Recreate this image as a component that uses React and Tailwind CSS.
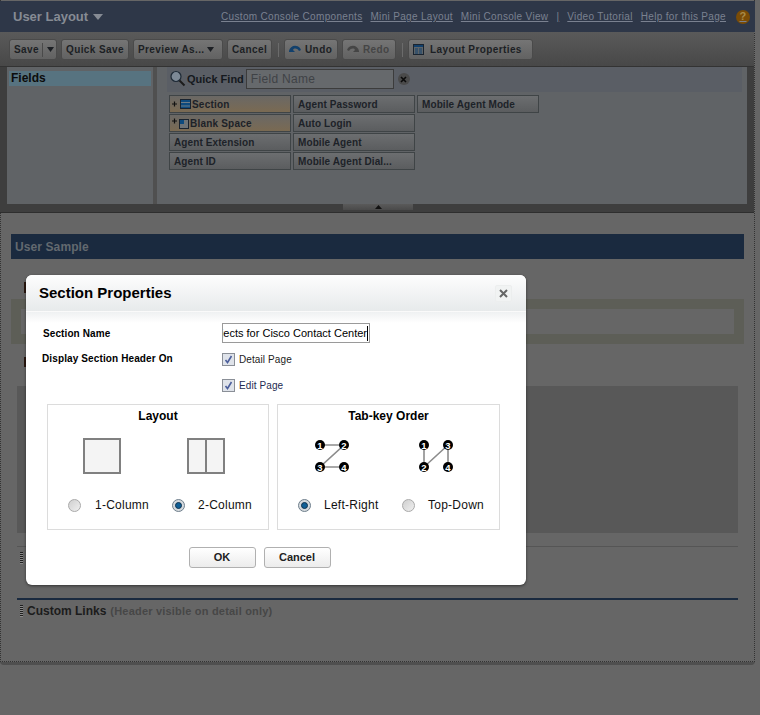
import React from 'react';

const ToolButton = ({ children, className = '' }) => (
    <div className={`h-[21px] flex items-center rounded-[3px] border border-[#4a4a4a] bg-gradient-to-b from-[#757575] to-[#626262] text-[10px] font-bold text-[#1c1f24] tracking-[0.4px] whitespace-nowrap ${className}`}>
        {children}
    </div>
);

const FieldChip = ({ label, highlight, icon }) => (
    <div className={`h-[18px] flex items-center border border-[#3f4446] text-[10px] font-bold tracking-[0.1px] text-[#1d2228] whitespace-nowrap overflow-hidden ${highlight ? 'bg-gradient-to-b from-[#6a6865] to-[#7a6a52]' : 'bg-gradient-to-b from-[#6c6e70] to-[#5b5d5f]'}`}>
        {icon}
        <span className={icon ? 'ml-[1px] tracking-[0.2px]' : 'ml-[4px]'}>{label}</span>
    </div>
);

const SectionIcon = () => (
    <svg width="19" height="11" viewBox="0 0 19 11" className="ml-[2px] shrink-0">
        <path d="M0 5h5M2.500 2.500v5" stroke="#111" strokeWidth="1.200" />
        <rect x="8.500" y="0.500" width="10" height="9" fill="#0d4a7e" stroke="#1a2430" />
        <path d="M9 3.500h9" stroke="#6d7c88" />
        <path d="M9 7h9" stroke="#6d7c88" />
    </svg>
);

const BlankIcon = () => (
    <svg width="17" height="11" viewBox="0 0 17 11" className="ml-[2px] shrink-0">
        <path d="M0 3h5M2.500 0.500v5" stroke="#111" strokeWidth="1.200" />
        <rect x="7.500" y="1.500" width="9" height="9" fill="#6d7377" stroke="#1a2430" />
        <rect x="8" y="2" width="4" height="4" fill="#0d4a7e" />
    </svg>
);

const Radio = ({ checked }) => (
    <span className={`w-[13px] h-[13px] rounded-full border shrink-0 flex items-center justify-center ${checked ? 'border-[#6f7f8c] bg-[#d5dade]' : 'border-[#a9a9a9] bg-gradient-to-br from-[#cfcfcf] to-[#f0f0f0]'}`}>
        {checked && <span className="w-[7px] h-[7px] rounded-full bg-[#0f5f96] border border-[#10334f]" />}
    </span>
);

const Check = () => (
    <span className="w-[13px] h-[13px] border border-[#8a8f97] bg-[#dfe3ea] flex items-center justify-center shrink-0">
        <svg width="9" height="9" viewBox="0 0 9 9">
            <path d="M1.500 5l2 2.500L7.500 1" fill="none" stroke="#4c5f9c" strokeWidth="1.600" />
        </svg>
    </span>
);

const Dot = ({ x, y, n }) => (
    <g>
        <circle cx={x} cy={y} r="5" fill="#000" />
        <text x={x} y={y + 3.5} textAnchor="middle" fontSize="9.500" fontWeight="700" fill="#fff" fontFamily="Liberation Sans">{n}</text>
    </g>
);

const Grip = () => (
    <span className="block w-[3px] h-[12px] shrink-0 bg-[repeating-linear-gradient(to_bottom,#1f1f1f_0,#1f1f1f_1px,#8a8a8a_1px,#8a8a8a_2px)]" />
);

const OrderIcon = ({ order }) => (
    <svg width="38" height="34" viewBox="0 0 38 34">
        {order === 'lr' ? (
            <path d="M7 7H31L7 29H31" fill="none" stroke="#8c8c8c" strokeWidth="1.600" />
        ) : (
            <path d="M7 7V29L31 7V29" fill="none" stroke="#8c8c8c" strokeWidth="1.600" />
        )}
        <Dot x={7} y={7} n="1" />
        <Dot x={31} y={7} n={order === 'lr' ? '2' : '3'} />
        <Dot x={7} y={29} n={order === 'lr' ? '3' : '2'} />
        <Dot x={31} y={29} n="4" />
    </svg>
);

const Dialog = () => (
    <div className="absolute left-[26px] top-[275px] w-[500px] h-[310px] bg-white rounded-[6px] shadow-[0_1px_3px_rgba(0,0,0,0.5)] overflow-hidden">
        <div className="h-[37px] flex items-center justify-between pl-[13px] pr-[14px] bg-gradient-to-b from-[#fdfdfd] to-[#e7eaeb] border-b border-[#fafafa]">
            <span className="text-[15px] font-bold text-black">Section Properties</span>
            <span className="w-[17px] h-[17px] flex items-center justify-center rounded-[2px] bg-[#f1f3f3] border border-[#eceeee]">
                <svg width="9" height="9" viewBox="0 0 9 9">
                    <path d="M1 1l7 7M8 1l-7 7" stroke="#666" strokeWidth="2" />
                </svg>
            </span>
        </div>
        <div className="h-[11px] bg-gradient-to-b from-[#eff1f2] to-white" />
        <div className="pl-[17px] flex h-[20px] items-center">
            <span className="w-[179px] text-[10px] font-bold tracking-[0.1px] text-black">Section Name</span>
            <div className="w-[148px] h-[20px] border border-[#9a9a9a] flex justify-end items-center overflow-hidden pr-[1px] text-[11px] text-black whitespace-nowrap">
                <span>Objects for Cisco Contact Center</span>
                <span className="w-px h-[15px] bg-black shrink-0" />
            </div>
        </div>
        <div className="pl-[16px] flex mt-[10px]">
            <span className="w-[180px] text-[10px] font-bold tracking-[0.12px] text-black leading-[13px] -mt-px">Display Section Header On</span>
            <div className="flex flex-col gap-[13px]">
                <div className="flex items-center h-[13px] gap-[4px] text-[10px] tracking-[0.1px] text-[#222]"><Check />Detail Page</div>
                <div className="flex items-center h-[13px] gap-[4px] text-[10px] tracking-[0.1px] text-[#1e2b52]"><Check />Edit Page</div>
            </div>
        </div>
        <div className="flex ml-[21px] mt-[12px] gap-[8px]">
            <div className="w-[222px] h-[126px] border border-[#dcdcdc] flex flex-col">
                <div className="text-[12px] font-bold text-center text-black mt-[3px] leading-[16px]">Layout</div>
                <div className="flex mt-[14px] pl-[35px] gap-[66px]">
                    <div className="w-[38px] h-[36px] border-[2px] border-[#808080] bg-[#f4f4f4]" />
                    <div className="w-[38px] h-[36px] border-[2px] border-[#808080] bg-[#f4f4f4] flex justify-center">
                        <div className="w-[2px] bg-[#808080]" />
                    </div>
                </div>
                <div className="flex items-center mt-[22px] pl-[20px] text-[12px] tracking-[0.25px] text-[#111]">
                    <Radio />
                    <span className="ml-[14px] w-[77px]">1-Column</span>
                    <Radio checked />
                    <span className="ml-[13px]">2-Column</span>
                </div>
            </div>
            <div className="w-[223px] h-[126px] border border-[#dcdcdc] flex flex-col">
                <div className="text-[12px] font-bold text-center text-black mt-[3px] leading-[16px]">Tab-key Order</div>
                <div className="flex mt-[14px] pl-[35px] gap-[66px]">
                    <OrderIcon order="lr" />
                    <OrderIcon order="td" />
                </div>
                <div className="flex items-center mt-[24px] pl-[20px] text-[12px] tracking-[0.25px] text-[#111]">
                    <Radio checked />
                    <span className="ml-[13px] w-[78px]">Left-Right</span>
                    <Radio />
                    <span className="ml-[13px]">Top-Down</span>
                </div>
            </div>
        </div>
        <div className="flex justify-center gap-[8px] mt-[17px] pr-[33px]">
            <div className="w-[67px] h-[21px] rounded-[3px] border border-[#b0b0b0] bg-gradient-to-b from-white to-[#ececec] flex items-center justify-center text-[11px] font-bold text-[#222]">OK</div>
            <div className="w-[67px] h-[21px] rounded-[3px] border border-[#b0b0b0] bg-gradient-to-b from-white to-[#ececec] flex items-center justify-center text-[11px] font-bold text-[#222]">Cancel</div>
        </div>
    </div>
);

export default function App() {
    return (
        <div className="relative w-[760px] h-[715px] bg-[#666666] overflow-hidden font-['Liberation_Sans',Arial,sans-serif]">
            <div className="w-[755px] h-[665px] border-b-[3px] border-[#4f4f4f] rounded-b-[4px]">
                <div className="h-[662px] border-x border-b border-dotted border-[#333] flex flex-col">
                    {/* top bar */}
                    <div className="h-[31px] mt-px -ml-px -mr-px pl-[13px] pr-[5px] flex items-center bg-[#2e3748] shrink-0">
                        <span className="text-[13px] font-bold text-[#868b94]">User Layout</span>
                        <svg width="10" height="6" viewBox="0 0 10 6" className="ml-[5px]"><path d="M0 0h10L5 6z" fill="#868b94" /></svg>
                        <div className="ml-auto flex items-center text-[10px] tracking-[0.32px] text-[#7a8190] underline whitespace-nowrap">
                            <span>Custom Console Components</span>
                            <span className="ml-[8px]">Mini Page Layout</span>
                            <span className="ml-[8px]">Mini Console View</span>
                            <span className="mx-[8px] no-underline">|</span>
                            <span>Video Tutorial</span>
                            <span className="ml-[8px]">Help for this Page</span>
                            <span className="ml-[10px] w-[14px] h-[14px] rounded-full bg-[#7a4c06] flex items-center justify-center text-[11px] font-bold text-[#a88a4a] no-underline">?</span>
                        </div>
                    </div>
                    {/* toolbar */}
                    <div className="h-[34px] pt-px -ml-px flex items-center pl-[9px] gap-[4px] bg-gradient-to-b from-[#5a5a5a] to-[#484848] shrink-0">
                        <ToolButton className="w-[48px] pl-[4px]">
                            Save
                            <span className="ml-[3px] w-px h-[14px] bg-[#4a4a4a]" />
                            <svg width="7" height="5" viewBox="0 0 7 5" className="ml-[4px]"><path d="M0 0h7L3.500 5z" fill="#1c1f24" /></svg>
                        </ToolButton>
                        <ToolButton className="w-[68px] pl-[4px]">Quick Save</ToolButton>
                        <ToolButton className="w-[90px] pl-[4px]">
                            Preview As...
                            <svg width="7" height="5" viewBox="0 0 7 5" className="ml-[2px]"><path d="M0 0h7L3.500 5z" fill="#1c1f24" /></svg>
                        </ToolButton>
                        <ToolButton className="w-[45px] pl-[4px]">Cancel</ToolButton>
                        <span className="w-px h-[14px] bg-[#6b6b6b] mx-[1.500px]" />
                        <ToolButton className="w-[54px] pl-[3px] gap-[3px]">
                            <svg width="14" height="12" viewBox="0 0 14 12"><path d="M1 7C2 2 8 0 12 4l1 2-2 1C9 4 6 4 5 6l2 2H1z" fill="#12406c" /></svg>
                            Undo
                        </ToolButton>
                        <ToolButton className="w-[54px] pl-[3px] gap-[3px] !text-[#454545]">
                            <svg width="14" height="12" viewBox="0 0 14 12"><path d="M13 7C12 2 6 0 2 4L1 6l2 1c2-3 5-3 6-1L7 8h6z" fill="#454545" /></svg>
                            Redo
                        </ToolButton>
                        <span className="w-px h-[14px] bg-[#6b6b6b] mx-[1.500px]" />
                        <ToolButton className="w-[125px] pl-[4px] gap-[6px]">
                            <svg width="11" height="11" viewBox="0 0 11 11">
                                <rect x="0.500" y="0.500" width="10" height="10" fill="#5e6468" stroke="#1a2430" />
                                <rect x="1" y="1" width="9" height="2" fill="#12406c" />
                                <path d="M2 5h3M6 5h3M2 7h3M6 7h3M2 9h3M6 9h3" stroke="#12406c" />
                            </svg>
                            Layout Properties
                        </ToolButton>
                    </div>
                    {/* field palette */}
                    <div className="h-[147px] -ml-px bg-[#3e3e3e] border-b border-[#2e2e2e] flex flex-col shrink-0">
                        <div className="h-[138px] flex pl-[7px] pr-[7px] border-t border-[#333]">
                            <div className="w-[146px] bg-[#606366] pt-[4px] px-[2px]">
                                <div className="h-[15px] pl-[2px] bg-[#577380] text-[12px] font-bold text-[#0c0c0c] leading-[15px]">Fields</div>
                            </div>
                            <div className="w-[4px] bg-[#505050]" />
                            <div className="flex-1 bg-[#606366] pl-[10px] pr-[5px]">
                                <div className="h-[25px] bg-[#5a5e65] flex items-start pt-[2px]">
                                    <svg width="17" height="17" viewBox="0 0 17 17" className="ml-[2px] mt-[1px]">
                                        <circle cx="7" cy="6.500" r="5" fill="#7d8996" stroke="#1e2a36" strokeWidth="1.200" />
                                        <path d="M10.500 10.500l5 5" stroke="#1c1c1c" strokeWidth="2" />
                                    </svg>
                                    <span className="ml-px text-[11px] font-bold text-[#15191e] mt-[2px]">Quick Find</span>
                                    <div className="ml-[2px] w-[148px] h-[20px] border border-[#3c3c3c] bg-[#66696c] text-[12px] text-[#3f4246] tracking-[0.3px] pl-[4px] leading-[19px]">Field Name</div>
                                    <span className="ml-[4px] mt-[4px] w-[12px] h-[12px] rounded-full bg-[#4a4a4a] flex items-center justify-center">
                                        <svg width="7" height="7" viewBox="0 0 7 7"><path d="M1 1l5 5M6 1l-5 5" stroke="#0a0a0a" strokeWidth="1.600" /></svg>
                                    </span>
                                </div>
                                <div className="grid grid-cols-[122px_122px_122px] grid-rows-[18px_18px_18px_18px] grid-flow-col gap-x-[2px] gap-y-px mt-[3px] ml-[2px]">
                                    <FieldChip label="Section" highlight icon={<SectionIcon />} />
                                    <FieldChip label="Blank Space" highlight icon={<BlankIcon />} />
                                    <FieldChip label="Agent Extension" />
                                    <FieldChip label="Agent ID" />
                                    <FieldChip label="Agent Password" />
                                    <FieldChip label="Auto Login" />
                                    <FieldChip label="Mobile Agent" />
                                    <FieldChip label="Mobile Agent Dial..." />
                                    <FieldChip label="Mobile Agent Mode" />
                                </div>
                            </div>
                        </div>
                        <div className="flex-1 flex justify-center pl-[2px]">
                            <div className="w-[70px] h-[6px] bg-gradient-to-b from-[#5a5a5a] to-[#4a4a4a] flex justify-center items-center">
                                <svg width="7" height="4" viewBox="0 0 7 4"><path d="M0 4h7L3.500 0z" fill="#111" /></svg>
                            </div>
                        </div>
                    </div>
                    {/* layout canvas */}
                    <div className="h-[25px] mt-[21px] ml-[10px] mr-[10px] pl-[4px] bg-[#1a2a3f] flex items-center text-[12px] font-bold text-[#62696f] tracking-[0.1px] shrink-0">User Sample</div>
                    <div className="w-[7px] h-[11px] ml-[23px] mt-[23px] bg-[#2a1810] shrink-0" />
                    <div className="h-[45px] mt-[6px] ml-[10px] mr-[10px] bg-[#5d5e57] p-[10px] shrink-0">
                        <div className="h-full bg-[#666666]" />
                    </div>
                    <div className="w-[7px] h-[10px] ml-[23px] mt-[13px] bg-[#2a1810] shrink-0" />
                    <div className="h-[147px] mt-[19px] ml-[16px] mr-[16px] bg-[#585858] shrink-0" />
                    <div className="mt-[13px] ml-[16px] mr-[16px] h-px bg-[#555] shrink-0" />
                    <div className="ml-[19px] mt-[5px] shrink-0"><Grip /></div>
                    <div className="mt-[34px] ml-[16px] mr-[16px] h-[2px] bg-[#1a2a3f] shrink-0" />
                    <div className="ml-[19px] mt-[2px] flex items-center gap-[4px] shrink-0">
                        <Grip />
                        <span className="text-[12px] font-bold text-[#1c1c1c]">Custom Links</span>
                        <span className="text-[11px] font-bold text-[#474747] tracking-[0.2px]">(Header visible on detail only)</span>
                    </div>
                </div>
            </div>
            <Dialog />
        </div>
    );
}
